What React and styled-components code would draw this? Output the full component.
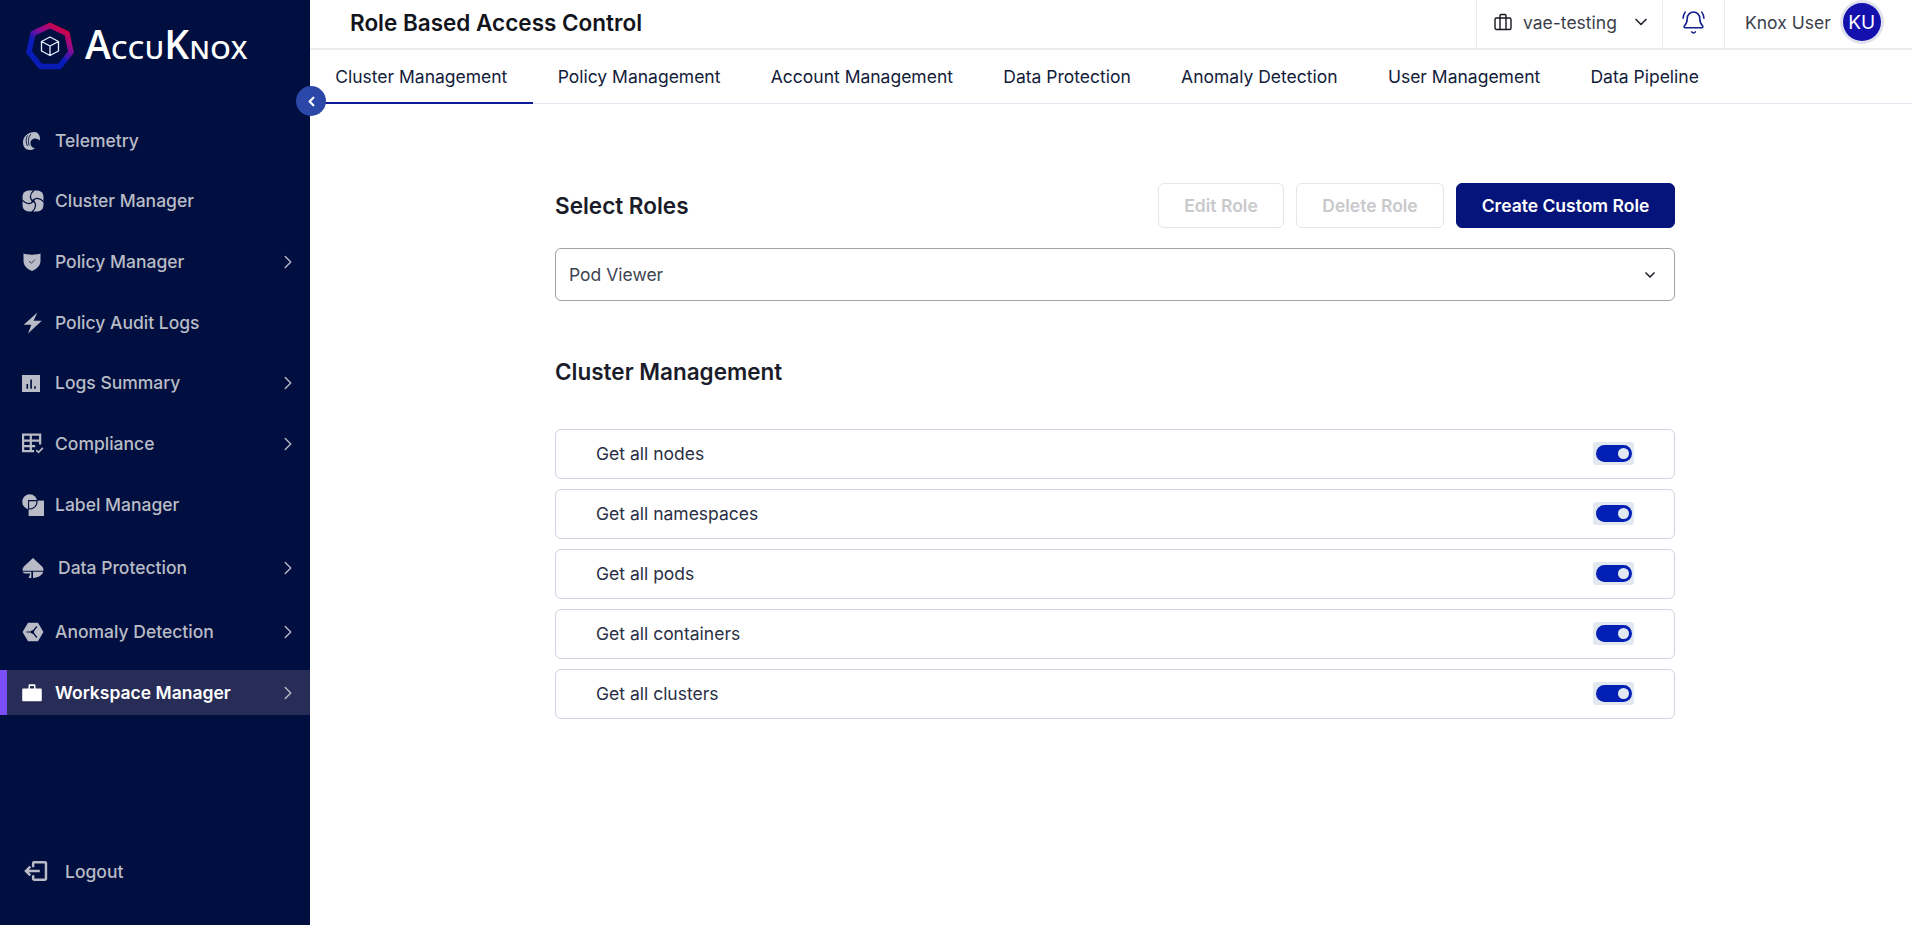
import React from 'react';
import styled, { createGlobalStyle } from 'styled-components';
import { ChevronRight, ChevronDown, ChevronLeft, BellRing } from 'lucide-react';

const GlobalStyle = createGlobalStyle`
  html, body { margin: 0; padding: 0; background: #fff; }
  body { font-family: Inter, "Noto Sans", sans-serif; overflow: hidden; }
  * { box-sizing: border-box; }
`;

const Page = styled.div`
  display: flex;
  width: 100%;
  height: 925px;
`;

const Sidebar = styled.aside`
  position: relative;
  flex: 0 0 310px;
  display: flex;
  flex-direction: column;
  background: #000f3f;
`;

const Brand = styled.div`
  display: flex;
  align-items: center;
  gap: 11px;
  height: 69px;
  padding: 22px 0 0 26px;
  margin-bottom: 49px;
`;

const Wordmark = styled.div`
  font-family: "Open Sans", sans-serif;
  font-weight: 600;
  color: #fff;
  line-height: 1;
  font-size: 26px;
  letter-spacing: 0.3px;
  white-space: nowrap;
  margin-bottom: 4px;
`;

const BigLetter = styled.span`
  font-size: 39px;
`;

const CollapseButton = styled.div`
  position: absolute;
  top: 86px;
  left: 296px;
  width: 30px;
  height: 30px;
  border-radius: 50%;
  background: #2b47a8;
  color: #fff;
  display: flex;
  align-items: center;
  justify-content: center;
  z-index: 2;
`;

const Nav = styled.nav`
  display: flex;
  flex-direction: column;
`;

const NavItem = styled.div`
  display: flex;
  align-items: center;
  height: 45px;
  margin-top: ${props => props.$gap}px;
  padding-left: ${props => (props.$active ? 15 : 22)}px;
  border-left: ${props => (props.$active ? '7px solid #7a4df5' : 'none')};
  background: ${props => (props.$active ? '#272d56' : 'transparent')};
  color: ${props => (props.$active ? '#fff' : '#b9bcc6')};
  font-size: 17.5px;
  font-weight: ${props => (props.$active ? 600 : 500)};
`;

const NavIcon = styled.span`
  flex: 0 0 ${props => props.$width || 33}px;
  display: flex;
  align-items: center;
`;

const NavLabel = styled.span`
  flex: 1;
`;

const NavArrow = styled.span`
  display: flex;
  color: #b9bcc6;
  margin-right: 11px;
`;

const LogoutRow = styled.div`
  display: flex;
  align-items: center;
  margin-top: auto;
  margin-bottom: 32px;
  padding-left: 23px;
  height: 44px;
  color: #b9bcc6;
  font-size: 17.5px;
  font-weight: 500;
  gap: 17px;
`;

const Main = styled.main`
  flex: 1;
  min-width: 0;
  display: flex;
  flex-direction: column;
`;

const TopBar = styled.header`
  display: flex;
  align-items: stretch;
  height: 50px;
  border-bottom: 2px solid #ececf0;
`;

const PageTitle = styled.h1`
  flex: 1;
  margin: 0;
  padding: 0 0 4px 40px;
  display: flex;
  align-items: center;
  font-size: 22.5px;
  font-weight: 600;
  color: #12141c;
`;

const TopCell = styled.div`
  display: flex;
  align-items: center;
  width: ${props => props.$width}px;
  padding: 0 0 4px ${props => props.$pad}px;
  border-left: 1px solid #ececf0;
  color: #3b3f4a;
  font-size: 17.5px;
`;

const WorkspaceName = styled.span`
  margin: 0 14px 0 11px;
`;

const Avatar = styled.span`
  margin-left: 12px;
  width: 38px;
  height: 38px;
  border-radius: 50%;
  background: #1310ad;
  box-shadow: 0 0 0 3px #e2e2ef;
  color: #fff;
  font-size: 19px;
  display: flex;
  align-items: center;
  justify-content: center;
`;

const Tabs = styled.div`
  display: flex;
  height: 54px;
  border-bottom: 1px solid #e2e8f0;
`;

const Tab = styled.div`
  display: flex;
  align-items: center;
  padding: 0 25.15px;
  margin-bottom: -1px;
  font-size: 17.5px;
  color: #12203a;
  border-bottom: 2px solid ${props => (props.$active ? '#0d1a9c' : 'transparent')};
`;

const Content = styled.section`
  width: 1120px;
  margin-left: 245px;
  padding-top: 79px;
`;

const RolesHeader = styled.div`
  display: flex;
  align-items: center;
  gap: 12px;
  margin-bottom: 20px;
`;

const SectionTitle = styled.h2`
  margin: ${props => props.$margin || 0};
  font-size: 22.5px;
  line-height: 24px;
  font-weight: 600;
  color: #1a1d29;
  flex: ${props => (props.$grow ? 1 : 'none')};
`;

const Button = styled.button`
  height: 45px;
  width: ${props => props.$width}px;
  padding: 0;
  border-radius: 6px;
  font-family: inherit;
  font-size: 17.5px;
  font-weight: 600;
  border: 1px solid ${props => (props.$primary ? '#05147a' : '#e6e6e8')};
  background: ${props => (props.$primary ? '#05147a' : '#fff')};
  color: ${props => (props.$primary ? '#fff' : '#c9c9cc')};
`;

const RoleSelect = styled.div`
  display: flex;
  align-items: center;
  justify-content: space-between;
  height: 53px;
  padding: 0 16px 0 13px;
  border: 1px solid #a3a3a6;
  border-radius: 6px;
  font-size: 17.5px;
  color: #3e4452;
`;

const Permissions = styled.div`
  display: flex;
  flex-direction: column;
  gap: 10px;
`;

const PermissionRow = styled.div`
  display: flex;
  align-items: center;
  justify-content: space-between;
  height: 50px;
  padding: 0 40px 2px 40px;
  border: 1px solid #cdd5e0;
  border-radius: 6px;
  font-size: 17.5px;
  color: #2a2f45;
`;

const ToggleFrame = styled.span`
  display: flex;
  align-items: center;
  justify-content: center;
  width: 41px;
  height: 23px;
  border-radius: 3px;
  background: #e2e8f0;
`;

const ToggleTrack = styled.span`
  display: flex;
  align-items: center;
  justify-content: flex-end;
  width: 36px;
  height: 17px;
  padding-right: 3px;
  border-radius: 9px;
  background: #0320b4;
`;

const ToggleKnob = styled.span`
  width: 11px;
  height: 11px;
  border-radius: 50%;
  background: #e2e8f0;
`;

const Svg = ({ size = 20, h, children, ...rest }) => (
  <svg width={size} height={h || size} viewBox="0 0 20 20" fill="#b9bcc6" {...rest}>
    {children}
  </svg>
);

const LogoMark = () => (
  <svg width="48" height="48" viewBox="0 0 48 48" fill="none">
    <defs>
      <linearGradient id="ring" x1="36" y1="4" x2="12" y2="42" gradientUnits="userSpaceOnUse">
        <stop offset="0" stopColor="#d8003a" />
        <stop offset="0.35" stopColor="#8a0c9a" />
        <stop offset="0.62" stopColor="#0a1cb8" />
        <stop offset="1" stopColor="#0a1cb8" />
      </linearGradient>
    </defs>
    <path
      d="M24 3.5 L41 11.5 L45 30 L33.5 44.5 L14.5 44.5 L3 30 L7 11.5 Z"
      stroke="url(#ring)"
      strokeWidth="5.5"
      strokeLinejoin="round"
    />
    <path
      d="M24 15 L32.5 19.5 V29 L24 33.5 L15.5 29 V19.5 Z M15.5 19.5 L24 24 L32.5 19.5 M24 24 V33.5"
      stroke="#e8f0ff"
      strokeWidth="1.3"
      strokeLinejoin="round"
    />
  </svg>
);

const TelemetryIcon = () => (
  <Svg size={20}>
    <path d="M13 1 C6 1 1 5.5 1 11.5 C1 15.5 3.5 19 8 19 C10 19 11.5 18.5 13 17 C10.5 17 8.5 15 8.5 12 C8.5 9 11 7.5 13 7.5 C15 7.5 17 8.5 18 9.5 C18.5 5 16 1 13 1 Z" />
    <path d="M5.5 4.5 C3.8 7 3.6 11 5.4 15" stroke="#000f3f" strokeWidth="0.9" fill="none" />
    <path d="M9 3 C6.5 5.5 5.8 10 7.2 14.5" stroke="#000f3f" strokeWidth="0.9" fill="none" />
  </Svg>
);

const ClusterIcon = () => (
  <Svg size={22}>
    <rect x="0.5" y="0.5" width="19" height="19" rx="5.5" />
    {[0, 90, 180, 270].map(angle => (
      <path
        key={angle}
        d="M10 10 C7 8.5 6.5 4 11 0"
        transform={`rotate(${angle} 10 10)`}
        stroke="#000f3f"
        strokeWidth="1.1"
        fill="none"
      />
    ))}
    <circle cx="10" cy="10" r="1.4" fill="#000f3f" />
  </Svg>
);

const ShieldIcon = () => (
  <Svg>
    <path d="M1.5 1.5 C4.5 3 15.5 3 18.5 1.5 V9 C18.5 14 14 17.5 10 19 C6 17.5 1.5 14 1.5 9 Z" />
    <path d="M7 9 L9.3 11.3 L13 7.5" stroke="#000f3f" strokeWidth="1" fill="none" opacity="0.7" />
  </Svg>
);

const BoltIcon = () => (
  <Svg size={22}>
    <path d="M14 .5 L10.5 8 H18 L5.5 19.5 L8.5 11.5 H1.5 Z" />
  </Svg>
);

const ChartIcon = () => (
  <Svg size={18}>
    <path
      fillRule="evenodd"
      d="M0 1 H20 V20 H0 Z M5 11 V16.5 H6.8 V11 Z M9.2 6 V16.5 H11 V6 Z M13.6 13.5 V16.5 H15.4 V13.5 Z"
    />
  </Svg>
);

const ComplianceIcon = () => (
  <Svg size={22}>
    <path
      fillRule="evenodd"
      d="M0 .5 H17.5 V10.5 H15.5 V8 H9 V11 H12 V13 H9 V15.5 H11 V17.5 H0 Z M2 2.5 V6 H7 V2.5 Z M9 2.5 V6 H15.5 V2.5 Z M2 8 V11 H7 V8 Z M2 13 V15.5 H7 V13 Z"
    />
    <path d="M13 15.5 L15 17.5 L19 13.5" stroke="#b9bcc6" strokeWidth="1.5" fill="none" />
  </Svg>
);

const LabelIcon = () => (
  <Svg size={22}>
    <circle cx="7" cy="7" r="6.8" />
    <rect x="6" y="6" width="14" height="14" />
    <path d="M13.6 6 H6 V13.6 A6.8 6.8 0 0 0 13.6 6 Z" fill="#b9bcc6" stroke="#000f3f" strokeWidth="1" />
  </Svg>
);

const DataIcon = () => (
  <Svg size={22}>
    <path d="M10 1 L18 8.5 C19.5 10 19.5 11.5 19.5 12.5 H.5 C.5 11.5 .5 10 2 8.5 Z" />
    <path d="M.7 13.5 H8.5 V19 H6 L7.5 15 H3 C2 15 1 14.5 .7 13.5 Z" />
    <path d="M10 13.5 H19.3 C18.5 16.5 15 19 10 19 Z" />
  </Svg>
);

const AnomalyIcon = () => (
  <Svg size={22}>
    <path d="M5.5 1.5 H14.5 L19.5 10 L14.5 18.5 H5.5 L.5 10 Z" />
    <path d="M4 10 H9.5 M9.5 10 L13.5 5 M9.5 10 L13.5 15" stroke="#000f3f" strokeWidth="1.1" fill="none" />
    <circle cx="9.5" cy="10" r="1.6" fill="#000f3f" />
  </Svg>
);

const BagIcon = () => (
  <Svg>
    <path d="M1.5 5.5 H6.5 V2.5 C6.5 1.7 7 1.2 7.8 1.2 H12.2 C13 1.2 13.5 1.7 13.5 2.5 V5.5 H18.5 C19.3 5.5 19.8 6 19.8 6.8 V17 C19.8 17.8 19.3 18.3 18.5 18.3 H1.5 C.7 18.3 .2 17.8 .2 17 V6.8 C.2 6 .7 5.5 1.5 5.5 Z M8 5.5 H12 V3 H8 Z" fill="#fff" fillRule="evenodd" />
  </Svg>
);

const LogoutIcon = () => (
  <svg width="25" height="20" viewBox="0 0 25 21" fill="none" stroke="#b9bcc6" strokeWidth="2.6">
    <path d="M10 6.5 V2.5 C10 1.6 10.6 1 11.5 1.3 H22 C23 1.3 23.5 1.6 23.5 2.5 V18.5 C23.5 19.4 23 19.7 22 19.7 H11.5 C10.6 19.7 10 19.4 10 18.5 V15" />
    <path d="M17 10.5 H2.5 M7 6 L2.5 10.5 L7 15" />
  </svg>
);

const CaseIcon = () => (
  <svg width="18" height="18" viewBox="0 0 18 18" fill="none" stroke="#16181f" strokeWidth="1.4">
    <rect x="1" y="5" width="16" height="11.5" rx="1.5" />
    <path d="M6 5 V2.8 C6 2 6.5 1.5 7.3 1.5 H10.7 C11.5 1.5 12 2 12 2.8 V5 M6 5 V16.5 M12 5 V16.5" />
  </svg>
);

const navItems = [
  { label: 'Telemetry', icon: <TelemetryIcon />, gap: 0 },
  { label: 'Cluster Manager', icon: <ClusterIcon />, gap: 15 },
  { label: 'Policy Manager', icon: <ShieldIcon />, arrow: true, gap: 16 },
  { label: 'Policy Audit Logs', icon: <BoltIcon />, gap: 16 },
  { label: 'Logs Summary', icon: <ChartIcon />, arrow: true, gap: 15 },
  { label: 'Compliance', icon: <ComplianceIcon />, arrow: true, gap: 16 },
  { label: 'Label Manager', icon: <LabelIcon />, gap: 16 },
  { label: 'Data Protection', icon: <DataIcon />, arrow: true, gap: 18, iconWidth: 36 },
  { label: 'Anomaly Detection', icon: <AnomalyIcon />, arrow: true, gap: 19 },
  { label: 'Workspace Manager', icon: <BagIcon />, arrow: true, gap: 16, active: true },
];

const tabs = [
  'Cluster Management',
  'Policy Management',
  'Account Management',
  'Data Protection',
  'Anomaly Detection',
  'User Management',
  'Data Pipeline',
];

const permissions = [
  'Get all nodes',
  'Get all namespaces',
  'Get all pods',
  'Get all containers',
  'Get all clusters',
];

export default function App() {
  return (
    <Page>
      <GlobalStyle />
      <Sidebar>
        <Brand>
          <LogoMark />
          <Wordmark>
            <BigLetter>A</BigLetter>CCU<BigLetter>K</BigLetter>NOX
          </Wordmark>
        </Brand>
        <CollapseButton>
          <ChevronLeft size={15} strokeWidth={3.5} />
        </CollapseButton>
        <Nav>
          {navItems.map(item => (
            <NavItem key={item.label} $gap={item.gap} $active={item.active}>
              <NavIcon $width={item.iconWidth}>{item.icon}</NavIcon>
              <NavLabel>{item.label}</NavLabel>
              {item.arrow && (
                <NavArrow>
                  <ChevronRight size={22} strokeWidth={1.5} />
                </NavArrow>
              )}
            </NavItem>
          ))}
        </Nav>
        <LogoutRow>
          <LogoutIcon />
          Logout
        </LogoutRow>
      </Sidebar>
      <Main>
        <TopBar>
          <PageTitle>Role Based Access Control</PageTitle>
          <TopCell $width={186} $pad={17}>
            <CaseIcon />
            <WorkspaceName>vae-testing</WorkspaceName>
            <ChevronDown size={20} color="#22252e" />
          </TopCell>
          <TopCell $width={62} $pad={18}>
            <BellRing size={25} color="#0f1f8f" strokeWidth={1.5} />
          </TopCell>
          <TopCell $width={188} $pad={20}>
            Knox User
            <Avatar>KU</Avatar>
          </TopCell>
        </TopBar>
        <Tabs>
          {tabs.map((tab, i) => (
            <Tab key={tab} $active={i === 0}>
              {tab}
            </Tab>
          ))}
        </Tabs>
        <Content>
          <RolesHeader>
            <SectionTitle $grow>Select Roles</SectionTitle>
            <Button $width={126}>Edit Role</Button>
            <Button $width={148}>Delete Role</Button>
            <Button $width={219} $primary>
              Create Custom Role
            </Button>
          </RolesHeader>
          <RoleSelect>
            Pod Viewer
            <ChevronDown size={16} strokeWidth={2.5} color="#22252e" />
          </RoleSelect>
          <SectionTitle $margin="59px 0 45px">Cluster Management</SectionTitle>
          <Permissions>
            {permissions.map(name => (
              <PermissionRow key={name}>
                {name}
                <ToggleFrame>
                  <ToggleTrack>
                    <ToggleKnob />
                  </ToggleTrack>
                </ToggleFrame>
              </PermissionRow>
            ))}
          </Permissions>
        </Content>
      </Main>
    </Page>
  );
}
